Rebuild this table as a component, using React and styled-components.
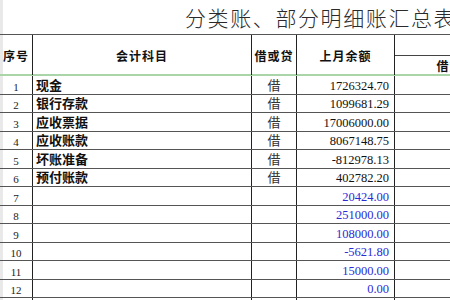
import React from "react";
import styled, { createGlobalStyle } from "styled-components";

const GlobalStyle = createGlobalStyle`
  html, body {
    margin: 0;
    padding: 0;
    background: #ffffff;
  }
  body {
    width: 450px;
    height: 300px;
    overflow: hidden;
  }
`;

const COLS = "33px 219px 45px 98px 110px 110px";

const Sheet = styled.div`
  width: 450px;
  height: 300px;
  overflow: hidden;
  background: linear-gradient(to right, #e9e9e9 0, #e9e9e9 3px, #ffffff 3px);
`;

const TitleBar = styled.div`
  height: 34px;
  padding-left: 185px;
  white-space: nowrap;
  font-family: "Noto Sans CJK SC", sans-serif;
  font-size: 21px;
  font-weight: 300;
  line-height: 34px;
  letter-spacing: 1.6px;
  color: #2a2a2a;
`;

const Head = styled.div`
  display: grid;
  grid-template-columns: ${COLS};
  grid-template-rows: 21px 19px;
  width: 615px;
  height: 42px;
  box-sizing: border-box;
  border-top: 1px solid #555;
  border-bottom: 2px solid #a9d5a9;
`;

const HeadCell = styled.div`
  grid-row: ${(p) => p.$row || "1 / 3"};
  grid-column: ${(p) => p.$col || "auto"};
  display: flex;
  align-items: center;
  justify-content: center;
  border-right: 1px solid #222;
  border-bottom: ${(p) => (p.$split ? "1px solid #444" : "none")};
  box-sizing: border-box;
  font-family: "Noto Sans CJK SC", sans-serif;
  font-size: 12px;
  font-weight: 700;
  letter-spacing: 1px;
  color: #111;
  white-space: nowrap;
`;

const Row = styled.div`
  display: grid;
  grid-template-columns: ${COLS};
  width: 615px;
  height: 18.5px;
  box-sizing: border-box;
  border-bottom: 1px solid #555;
`;

const Cell = styled.div`
  display: flex;
  align-items: ${(p) => (p.$low ? "flex-end" : "center")};
  justify-content: ${(p) =>
    p.$align === "right" ? "flex-end" : p.$align === "left" ? "flex-start" : "center"};
  padding-left: ${(p) => (p.$align === "left" ? "3px" : "0")};
  padding-right: ${(p) => (p.$align === "right" ? "5px" : "0")};
  border-right: 1px solid #222;
  box-sizing: border-box;
  overflow: hidden;
  white-space: nowrap;
`;

const SeqText = styled.span`
  font-family: "Liberation Serif", serif;
  font-size: 11px;
  line-height: 14px;
  color: #222;
`;

const NameText = styled.span`
  font-family: "Noto Sans CJK SC", sans-serif;
  font-size: 13px;
  font-weight: 700;
  line-height: 16px;
  color: #111;
`;

const SideText = styled.span`
  font-family: "Noto Sans CJK SC", sans-serif;
  font-size: 13px;
  line-height: 16px;
  color: #333;
`;

const Amount = styled.span`
  font-family: "Liberation Serif", serif;
  font-size: 12.5px;
  line-height: 16px;
  padding-top: 2px;
  color: ${(p) => (p.$blue ? "#2b2bd6" : "#111")};
`;

const rows = [
  { name: "现金", side: "借", amount: "1726324.70" },
  { name: "银行存款", side: "借", amount: "1099681.29" },
  { name: "应收票据", side: "借", amount: "17006000.00" },
  { name: "应收账款", side: "借", amount: "8067148.75" },
  { name: "坏账准备", side: "借", amount: "-812978.13" },
  { name: "预付账款", side: "借", amount: "402782.20" },
  { name: "", side: "", amount: "20424.00", blue: true },
  { name: "", side: "", amount: "251000.00", blue: true },
  { name: "", side: "", amount: "108000.00", blue: true },
  { name: "", side: "", amount: "-5621.80", blue: true },
  { name: "", side: "", amount: "15000.00", blue: true },
  { name: "", side: "", amount: "0.00", blue: true },
  { name: "", side: "", amount: "" },
];

export default function App() {
  return (
    <>
      <GlobalStyle />
      <Sheet>
        <TitleBar>分类账、部分明细账汇总表</TitleBar>
        <Head>
          <HeadCell $col="1">序号</HeadCell>
          <HeadCell $col="2">会计科目</HeadCell>
          <HeadCell $col="3">借或贷</HeadCell>
          <HeadCell $col="4">上月余额</HeadCell>
          <HeadCell $col="5 / 7" $row="1" $split />
          <HeadCell $col="5" $row="2">借方</HeadCell>
          <HeadCell $col="6" $row="2">贷方</HeadCell>
        </Head>
        {rows.map((r, i) => (
          <Row key={i}>
            <Cell $low>
              <SeqText>{i + 1}</SeqText>
            </Cell>
            <Cell $align="left">
              <NameText>{r.name}</NameText>
            </Cell>
            <Cell>
              <SideText>{r.side}</SideText>
            </Cell>
            <Cell $align="right">
              <Amount $blue={r.blue}>{r.amount}</Amount>
            </Cell>
            <Cell />
            <Cell />
          </Row>
        ))}
      </Sheet>
    </>
  );
}
